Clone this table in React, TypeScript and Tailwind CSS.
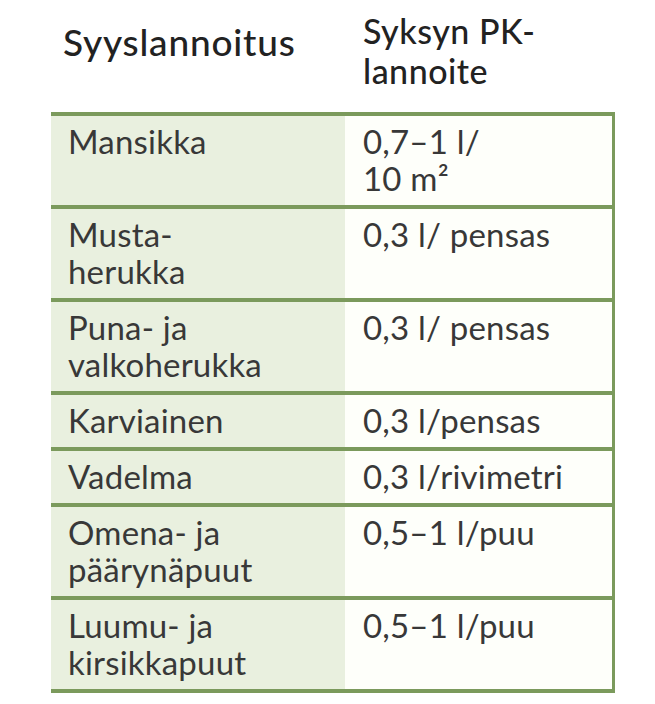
import React from "react";

const rows: [string[], string[]][] = [
  [["Mansikka"], ["0,7–1 l/", "10 m²"]],
  [["Musta-", "herukka"], ["0,3 l/ pensas"]],
  [["Puna- ja", "valkoherukka"], ["0,3 l/ pensas"]],
  [["Karviainen"], ["0,3 l/pensas"]],
  [["Vadelma"], ["0,3 l/rivimetri"]],
  [["Omena- ja", "päärynäpuut"], ["0,5–1 l/puu"]],
  [["Luumu- ja", "kirsikkapuut"], ["0,5–1 l/puu"]],
];

export default function App() {
  return (
    <div
      className="w-[655px] h-[704px] bg-white overflow-hidden"
      style={{ fontFamily: "Lato, 'Liberation Sans', sans-serif" }}
    >
      <div className="flex pt-[22px] ml-[51px] h-[112px] text-[#222]">
        <div className="w-[294px] pl-[12px] text-[37px] leading-[40px] font-medium tracking-[0.8px]">
          Syyslannoitus
        </div>
        <div className="pl-[18px] text-[34px] leading-[40px] font-medium tracking-[0.5px] -mt-[11px]">
          Syksyn PK-
          <br />
          lannoite
        </div>
      </div>
      <div className="ml-[51px] w-[564px] border-t-4 border-r-[3px] border-[#7b9a5c] text-[#383838] text-[33px] leading-[37px] tracking-[0.2px]">
        {rows.map(([a, b], i) => (
          <div key={i} className="grid grid-cols-[294px_1fr] border-b-4 border-[#7b9a5c]">
            <div className="bg-[#e9f0df] pl-[17px] pt-[7px] pb-[8px]">
              {a.map((t, j) => (
                <React.Fragment key={j}>
                  {j > 0 && <br />}
                  {t}
                </React.Fragment>
              ))}
            </div>
            <div className="bg-[#fefffa] pl-[18px] pt-[7px] pb-[8px]">
              {b.map((t, j) => (
                <React.Fragment key={j}>
                  {j > 0 && <br />}
                  {t}
                </React.Fragment>
              ))}
            </div>
          </div>
        ))}
      </div>
    </div>
  );
}
